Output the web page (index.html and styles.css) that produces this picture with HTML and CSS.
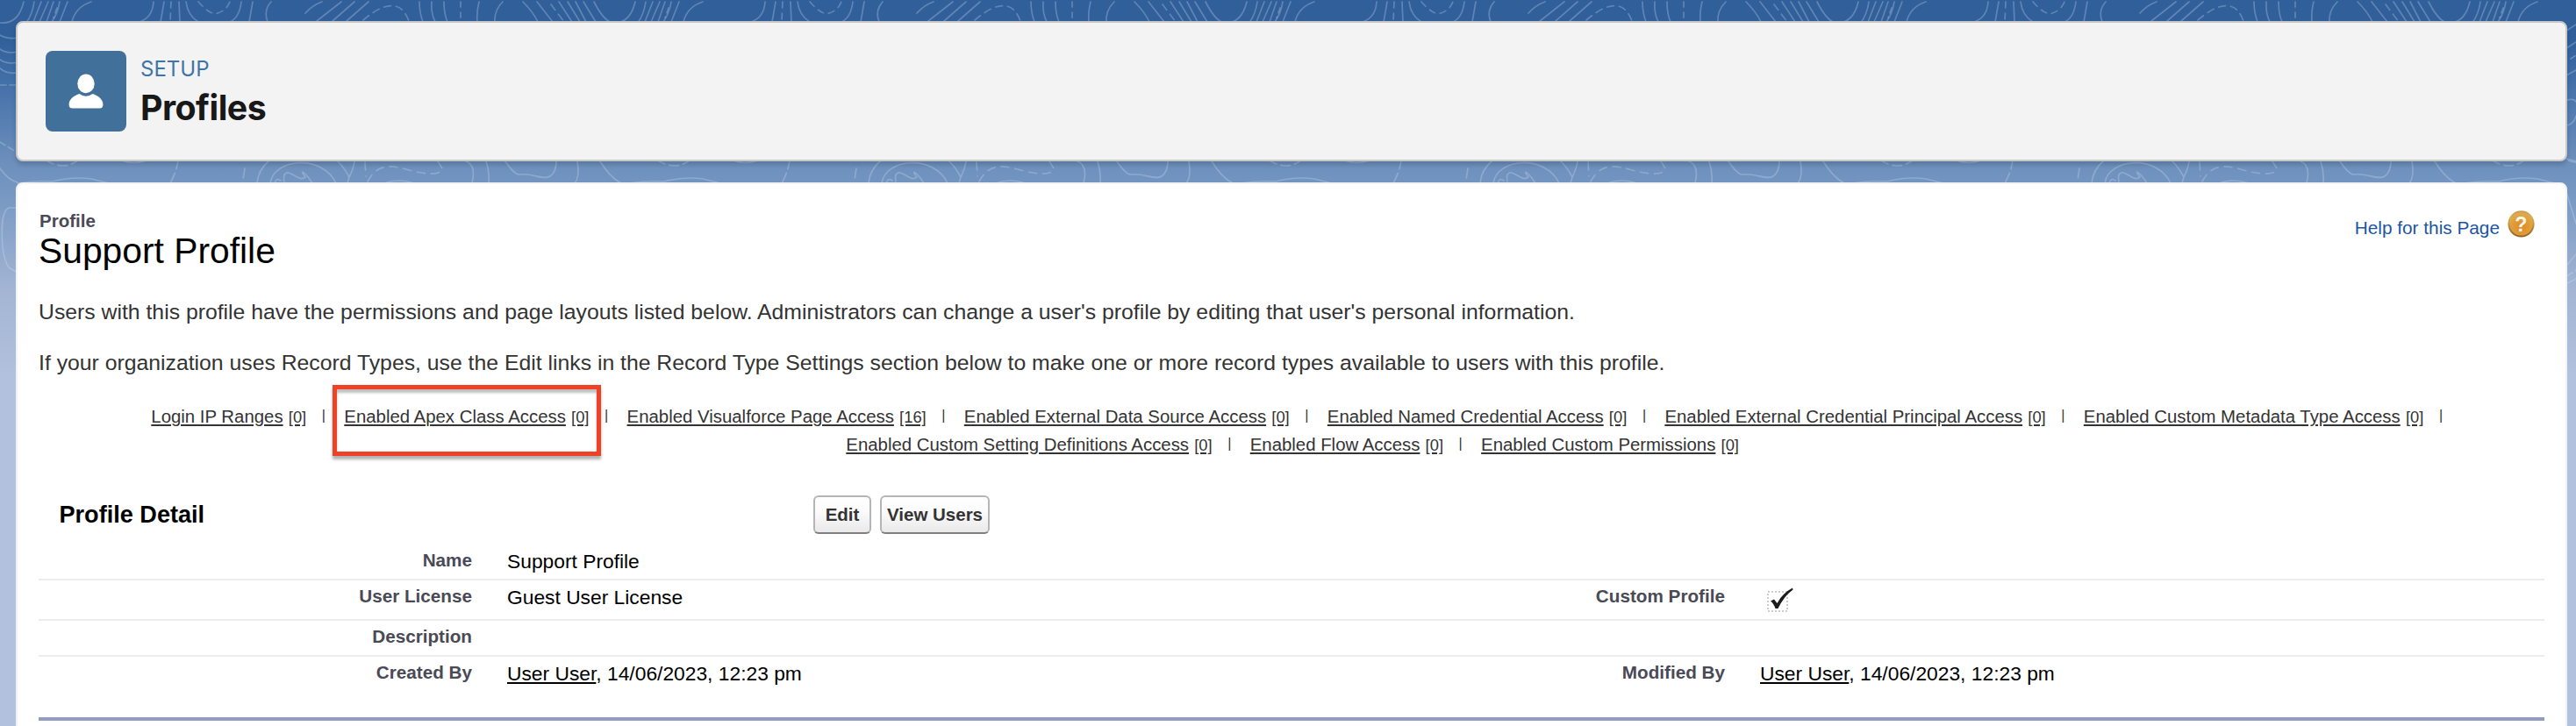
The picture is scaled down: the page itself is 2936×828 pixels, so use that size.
FILE: index.html
```html
<!DOCTYPE html>
<html lang="en">
<head>
<meta charset="utf-8">
<title>Profiles</title>
<link rel="stylesheet" href="styles.css">
</head>
<body>
<div class="page">
  <svg class="contours" width="2936" height="828" viewBox="0 0 2936 828" aria-hidden="true">
    <defs>
      <g id="tile">
        <!-- band above the header -->
        <path d="M27 2Q21 28 0 26M39 2Q37 16 30 26M47 2L38 25M55 2L45 25M61 2L53 25M68 2Q66 15 59 25M77 2L68 25M104 2Q86 8 82 25"/>
        <path d="M65 9L61 20" stroke-dasharray="6 5"/>
        <path d="M175 2Q174 20 159 25M187 2L183 25M204 2L205 25M212 2Q214 18 226 25M275 2Q273 20 262 25M288 2L284 25M309 2Q300 12 305 25"/>
        <path d="M195 2L194 25M226 2Q240 18 248 15Q258 12 262 2" stroke-dasharray="7 6"/>
        <path d="M367 2Q356 6 348 15M389 2L361 24M404 2L379 24M420 2L395 24"/>
        <path d="M414 23Q436 4 450 7Q460 8 466 24" stroke-dasharray="8 6"/>
        <path d="M478 2Q478 14 482 25M492 2Q491 15 496 25M506 2Q506 16 510 25M546 2Q543 14 544 25M573 2Q563 12 564 25"/>
        <path d="M525 2L525 25" stroke-dasharray="6 6"/>
        <path d="M596 2Q608 14 613 25M612 2L630 25M637 2L652 25M647 2L661 25M656 2L668 25M665 2L679 25M677 2Q687 22 697 26"/>
        <path d="M628 5L643 25" stroke-dasharray="8 6"/>
        <!-- band between the two cards -->
        <path d="M51 182Q73 196 90 182M203 182Q202 194 194 209M279 192L277 205" stroke-dasharray="11 5"/>
        <path d="M139 183Q152 188 167 183M20 209Q40 206 60 207C75 203 90 202 104 204L124 209"/>
        <path d="M293 209Q294 194 307 183M308 209C312 180 368 176 383 209M313 209Q315 202 320 206M324 207Q322 196 329 197C336 199 342 207 348 202C340 192 348 196 356 209"/>
        <path d="M385 184Q393 192 398 202M404 184Q403 192 398 202L396 209M438 209Q454 203 472 209"/>
        <path d="M416 185L417 201M419 207C430 186 446 188 466 194Q492 201 502 196M499 184L504 192" stroke-dasharray="9 7"/>
        <path d="M531 184Q543 188 538 209M554 184Q558 196 557 209M576 184Q586 199 592 199C606 197 620 206 627 201Q634 196 634 184M658 184Q661 202 655 209M684 184Q695 202 708 209"/>
      </g>
    </defs>
    <g class="contour-lines">
      <use href="#tile"/>
      <use href="#tile" x="697"/>
      <use href="#tile" x="1394"/>
      <use href="#tile" x="2091"/>
      <use href="#tile" x="2788"/>
      <!-- left edge -->
      <path d="M0 40Q8 45 20 43M0 56Q8 62 20 59M0 68Q8 74 20 71M0 78Q8 85 20 83M0 192Q10 206 20 208M2 262Q3 240 10 237H20M3 250Q0 290 10 305L20 311"/>
      <path d="M0 97H20M0 162L18 173" stroke-dasharray="7 4"/>
      <!-- right edge -->
      <path d="M2925 35L2936 28M2925 55L2936 48M2925 86L2936 80M2926 114Q2934 112 2936 116M2926 143Q2934 141 2936 132M2925 181L2936 184M2925 219L2936 255M2926 302L2936 290M2926 323L2936 318"/>
      <path d="M2930 67L2936 63M2927 314L2936 308" stroke-dasharray="6 4"/>
    </g>
  </svg>

  <header class="header">
    <svg class="header-icon" width="92" height="92" viewBox="0 0 92 92" aria-hidden="true">
      <rect width="92" height="92" rx="8" fill="#41719b"/>
      <ellipse cx="46" cy="37.4" rx="9.7" ry="10.8" fill="#fff"/>
      <path d="M38.5 49Q46 54.5 53.5 49C61 51.5 65.4 56 65.4 61V62Q65 65.6 61.500 65.600H30.500Q27 65.600 26.600 62V61C26.600 56 31 51.500 38.500 49Z" fill="#fff"/>
    </svg>
    <div class="header-text">
      <div class="header-kicker">SETUP</div>
      <h1 class="header-title">Profiles</h1>
    </div>
  </header>

  <main class="card">
    <div class="title-row">
      <div>
        <div class="type">Profile</div>
        <h2 class="name">Support Profile</h2>
      </div>
      <div class="help">
        <a class="help-link">Help for this Page</a>
        <svg class="help-icon" width="31" height="31" viewBox="0 0 31 31" aria-hidden="true">
          <defs>
            <radialGradient id="gold" cx=".5" cy=".62" r=".6">
              <stop offset="0" stop-color="#e08a2c"/>
              <stop offset=".5" stop-color="#e09a37"/>
              <stop offset=".85" stop-color="#dfab4c"/>
              <stop offset="1" stop-color="#c99d55"/>
            </radialGradient>
            <linearGradient id="rim" x1="0" y1="0" x2="0" y2="1">
              <stop offset=".3" stop-color="#7d5417" stop-opacity="0"/>
              <stop offset="1" stop-color="#7d5417" stop-opacity=".8"/>
            </linearGradient>
          </defs>
          <circle cx="15.500" cy="15.300" r="15" fill="url(#gold)"/>
          <circle cx="15.500" cy="15.300" r="14.200" fill="none" stroke="url(#rim)" stroke-width="2"/>
          <text class="help-mark" x="15.300" y="23.500" text-anchor="middle">?</text>
        </svg>
      </div>
    </div>

    <p class="intro">Users with this profile have the permissions and page layouts listed below. Administrators can change a user's profile by editing that user's personal information.</p>
    <p class="intro">If your organization uses Record Types, use the Edit links in the Record Type Settings section below to make one or more record types available to users with this profile.</p>

    <nav class="links">
      <div class="links-row links-row-first">
        <a class="link">Login IP Ranges</a><a class="count">[0]</a><span class="bar">|</span>
        <span class="marked"><a class="link">Enabled Apex Class Access</a><a class="count">[0]</a></span><span class="bar">|</span>
        <a class="link">Enabled Visualforce Page Access</a><a class="count">[16]</a><span class="bar">|</span>
        <a class="link">Enabled External Data Source Access</a><a class="count">[0]</a><span class="bar">|</span>
        <a class="link">Enabled Named Credential Access</a><a class="count">[0]</a><span class="bar">|</span>
        <a class="link">Enabled External Credential Principal Access</a><a class="count">[0]</a><span class="bar">|</span>
        <a class="link">Enabled Custom Metadata Type Access</a><a class="count">[0]</a><span class="bar">|</span>
      </div>
      <div class="links-row links-row-second">
        <a class="link">Enabled Custom Setting Definitions Access</a><a class="count">[0]</a><span class="bar">|</span>
        <a class="link">Enabled Flow Access</a><a class="count">[0]</a><span class="bar">|</span>
        <a class="link">Enabled Custom Permissions</a><a class="count">[0]</a>
      </div>
    </nav>

    <section class="detail">
      <div class="detail-head">
        <h3 class="detail-title">Profile Detail</h3>
        <button class="btn btn-edit">Edit</button>
        <button class="btn btn-view">View Users</button>
      </div>
      <div class="row row-first">
        <div class="label">Name</div><div class="value">Support Profile</div>
      </div>
      <div class="row row-license">
        <div class="label">User License</div><div class="value">Guest User License</div>
        <div class="label">Custom Profile</div>
        <div class="value">
          <svg class="check" width="40" height="34" viewBox="0 0 40 34" aria-hidden="true">
            <rect x="9" y="7" width="22" height="22" fill="none" stroke="#ccc" stroke-width="2" stroke-dasharray="2 2"/>
            <path d="M12 17.500L16 15.500L19.500 20Q26 8 37 2.500L37.500 4.500Q27 12 20.500 26H17.500Q15.500 20 12 17.500Z" fill="#1b1b1b"/>
          </svg>
        </div>
      </div>
      <div class="row row-description">
        <div class="label">Description</div>
      </div>
      <div class="row row-last">
        <div class="label">Created By</div><div class="value"><a class="user">User User</a>, 14/06/2023, 12:23 pm</div>
        <div class="label">Modified By</div><div class="value"><a class="user">User User</a>, 14/06/2023, 12:23 pm</div>
      </div>
    </section>
  </main>
</div>
</body>
</html>
```

FILE: styles.css
```css
*, *::after { box-sizing: border-box; }

body {
  margin: 0;
  font-family: "Liberation Sans", Arial, sans-serif;
  color: #333;
}

h1, h2, h3, p { margin: 0; }

.page {
  position: relative;
  height: 828px;
  padding: 24px 10px 0 18px;
  overflow: hidden;
  background: linear-gradient(#305f9a 0, #305f9a 45px, #4672aa 100px, #6d8fbc 185px, #7496c1 215px, #a3b5d3 330px, #b1c1de 430px);
}

.contours { position: absolute; top: 0; left: 0; }

.contour-lines {
  fill: none;
  stroke: #d5e4f4;
  stroke-opacity: .29;
  stroke-width: 1.7;
  stroke-linecap: round;
}

.header {
  position: relative;
  display: flex;
  gap: 16px;
  height: 160px;
  padding: 32px 32px 0;
  border: 2px solid #c9c9c9;
  border-radius: 8px;
  background: #f3f3f3;
  box-shadow: 0 4px 5px rgba(0, 0, 0, .16);
}

.header-text { padding-top: 5px; font-family: Inter, sans-serif; }

.header-kicker {
  margin-bottom: 6px;
  font-size: 24px;
  line-height: 32px;
  color: #3f74a8;
}

.header-title {
  font-size: 39.3px;
  line-height: 44px;
  letter-spacing: -.5px;
  color: #181818;
}

.card {
  position: relative;
  height: 640px;
  margin-top: 24px;
  padding: 30px 24px 0;
  border: 2px solid #f3f3f3;
  border-radius: 8px;
  background: #fff;
}

.title-row {
  display: flex;
  justify-content: space-between;
  height: 68px;
  margin-bottom: 33px;
}

.type {
  padding-left: 1px;
  font-size: 20.5px;
  font-weight: bold;
  line-height: 24px;
  color: #4a4a56;
}

.name {
  font-size: 40.8px;
  font-weight: normal;
  line-height: 44px;
  color: #000;
}

.help {
  display: flex;
  gap: 9px;
  margin-right: 11px;
}

.help-link {
  padding-top: 5px;
  font-size: 20.8px;
  line-height: 30px;
  color: #1c55a1;
}

.help-mark { font: bold 23px "Liberation Sans", sans-serif; fill: #fff8e8; }

.intro {
  margin-bottom: 28px;
  font-size: 24.77px;
  line-height: 30px;
  white-space: nowrap;
}

.links { padding-top: 2px; }

.links-row {
  display: flex;
  height: 32px;
  line-height: 32px;
  white-space: nowrap;
}

.links-row-first { padding-left: 128.3px; }
.links-row-second { padding-left: 920.3px; }

.link, .count, .user {
  text-decoration: underline;
  text-decoration-thickness: 2px;
  text-underline-offset: 2px;
}

.link { font-size: 20.39px; }

.count {
  margin-left: 6.2px;
  padding-top: .7px;
  font-size: 18.36px;
}

.bar {
  width: 43.1px;
  padding-left: 17.6px;
  font-size: 16px;
  line-height: 29px;
}

.marked { position: relative; display: flex; }

.marked::after {
  content: "";
  position: absolute;
  top: -20px;
  left: -13.5px;
  width: 306px;
  height: 81px;
  border: 5px solid #ee4126;
  box-shadow: 0 4px 3px rgba(0, 0, 0, .3), inset 0 4px 3px rgba(0, 0, 0, .25);
}

.detail { margin-top: 42px; }

.detail-head { display: flex; height: 44px; }

.detail-title {
  width: 883px;
  padding-left: 23.5px;
  font-size: 27.1px;
  line-height: 43px;
  color: #000;
}

.btn {
  height: 44px;
  padding: 0;
  border: 2px solid #b5b5b5;
  border-bottom-color: #7f7f7f;
  border-radius: 6px;
  background: linear-gradient(#fff, #fbfbfb 40%, #e9e9e9);
  font: bold 20.5px/40px "Liberation Sans", sans-serif;
  color: #333;
}

.btn-edit { width: 66px; margin-right: 10px; }
.btn-view { width: 125px; }

.row {
  display: grid;
  grid-template-columns: 494px 854px 494px 1fr;
  column-gap: 40px;
  padding-top: 5px;
  border-bottom: 2px solid #ececec;
}

.row-first { height: 53px; padding-top: 17px; }
.row-license { height: 46px; }
.row-description { height: 41px; }
.row-last { height: 73px; border-bottom: 4px solid #929dbf; }

.label {
  font-size: 20.7px;
  font-weight: bold;
  line-height: 26px;
  text-align: right;
  color: #4a4a56;
}

.value {
  padding-top: 1px;
  font-size: 22.8px;
  line-height: 26px;
  color: #000;
}

.check { display: block; }
```
